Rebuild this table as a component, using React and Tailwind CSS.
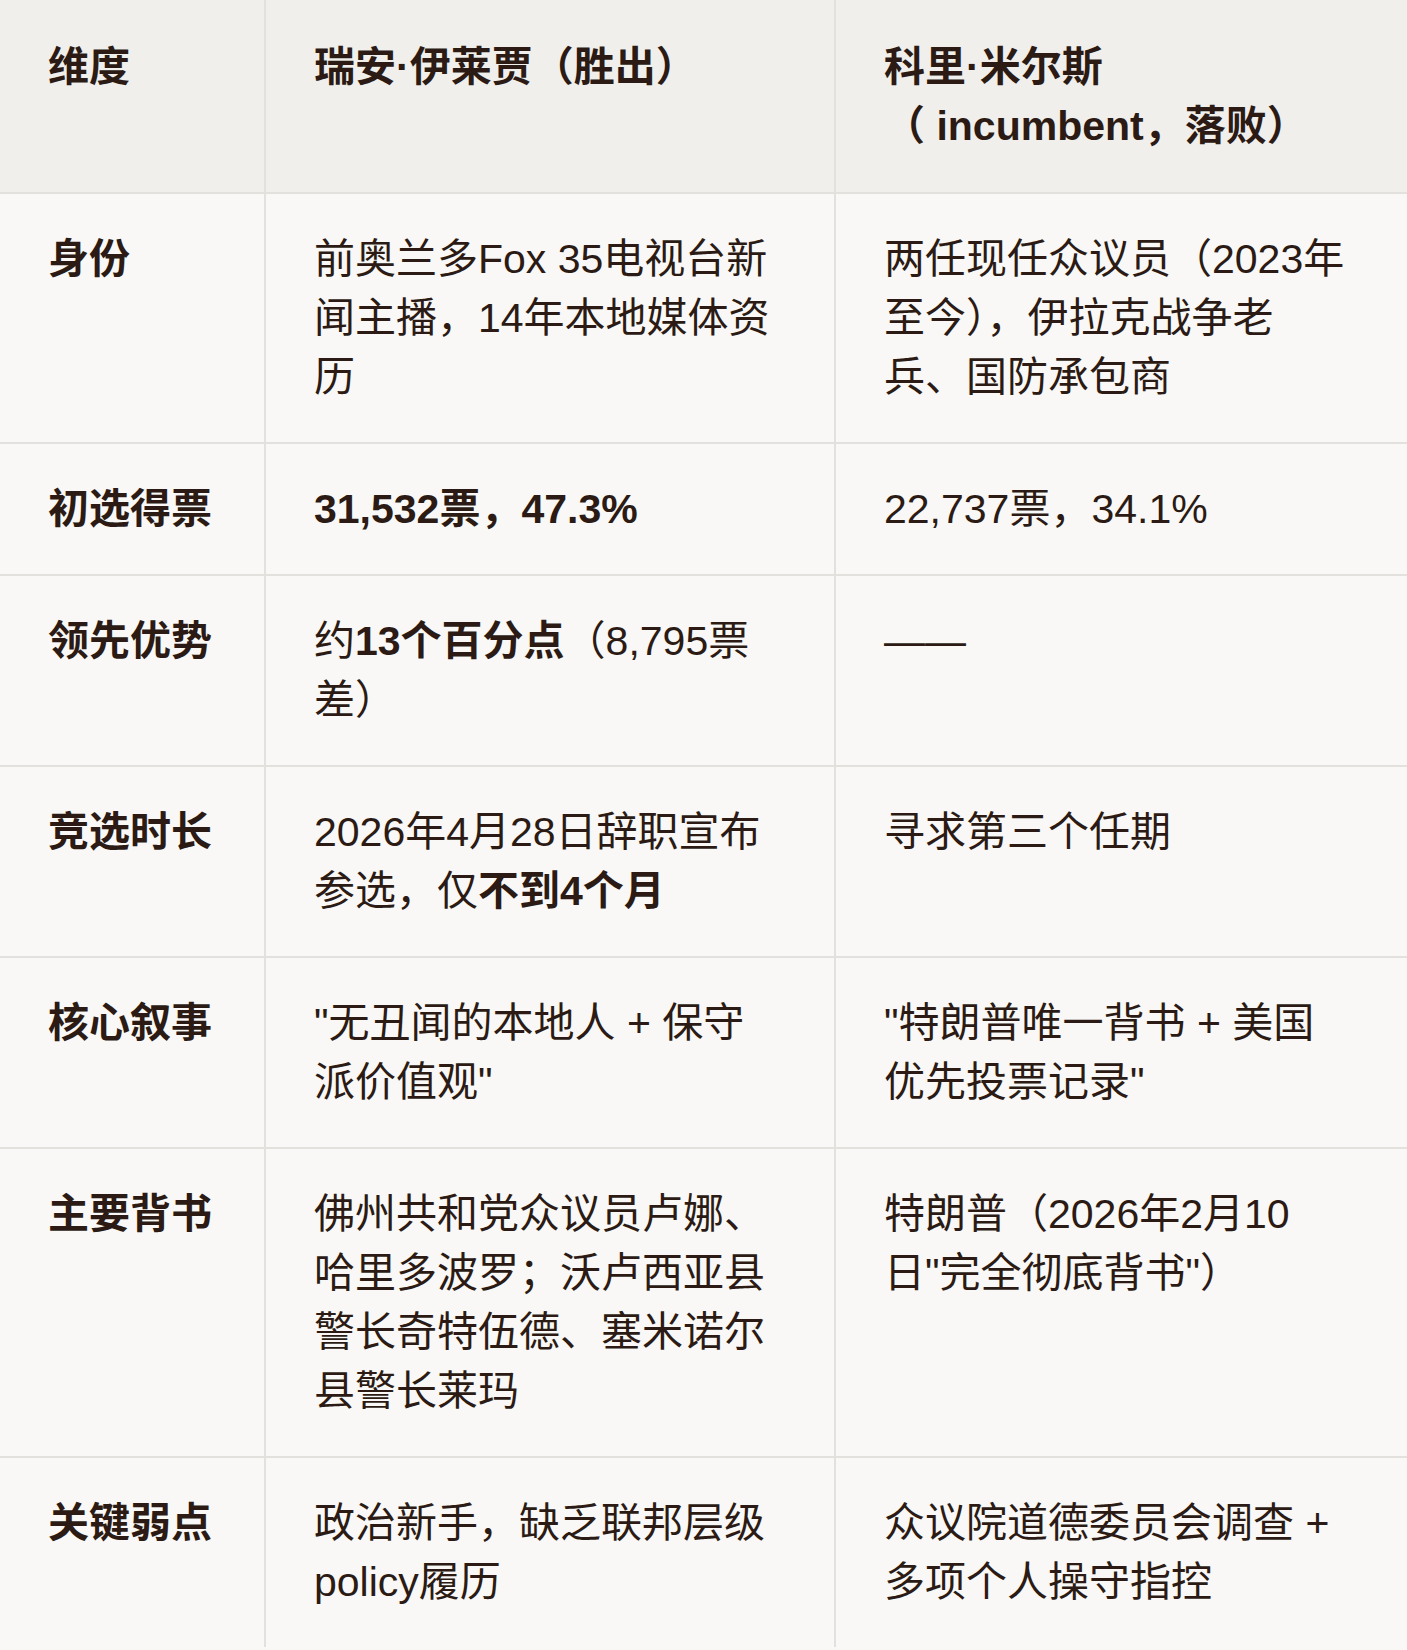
import React from 'react'

const rows = [
  {
    key: '身份',
    a: <>前奥兰多Fox 35电视台新<br />闻主播，14年本地媒体资<br />历</>,
    b: <>两任现任众议员（2023年<br />至今），伊拉克战争老<br />兵、国防承包商</>,
  },
  {
    key: '初选得票',
    a: <strong className="font-bold">31,532票，47.3%</strong>,
    b: <>22,737票，34.1%</>,
  },
  {
    key: '领先优势',
    a: <>约<strong className="font-bold">13个百分点</strong>（8,795票<br />差）</>,
    b: <>——</>,
  },
  {
    key: '竞选时长',
    a: <>2026年4月28日辞职宣布<br />参选，仅<strong className="font-bold">不到4个月</strong></>,
    b: <>寻求第三个任期</>,
  },
  {
    key: '核心叙事',
    a: <>"无丑闻的本地人 + 保守<br />派价值观"</>,
    b: <>"特朗普唯一背书 + 美国<br />优先投票记录"</>,
  },
  {
    key: '主要背书',
    a: <>佛州共和党众议员卢娜、<br />哈里多波罗；沃卢西亚县<br />警长奇特伍德、塞米诺尔<br />县警长莱玛</>,
    b: <>特朗普（2026年2月10<br />日"完全彻底背书"）</>,
  },
  {
    key: '关键弱点',
    a: <>政治新手，缺乏联邦层级<br />policy履历</>,
    b: <>众议院道德委员会调查 +<br />多项个人操守指控</>,
  },
]

const cell = 'align-top pl-[48px] pr-[36px] border-2 border-[#e3e1de]'

const App = () => {
  return (
    <div className="w-[1407px] min-h-[1650px] bg-[#f9f8f6] text-[#2b1b14] font-['Liberation_Sans','Noto_Sans_CJK_SC',sans-serif] text-[41px] leading-[59px]">
      <table className="w-full table-fixed border-collapse border-hidden">
        <colgroup>
          <col className="w-[265px]" />
          <col className="w-[570px]" />
          <col />
        </colgroup>
        <thead>
          <tr className="bg-[#f0efec] text-left">
            <th className={cell + ' font-bold pt-[38px] pb-[36px]'}>维度</th>
            <th className={cell + ' font-bold pt-[38px] pb-[36px]'}>瑞安·伊莱贾（胜出）</th>
            <th className={cell + ' font-bold pt-[38px] pb-[36px]'}>
              科里·米尔斯<br />（ incumbent，落败）
            </th>
          </tr>
        </thead>
        <tbody>
          {rows.map((r) => (
            <tr key={r.key} className="bg-[#f9f8f6]">
              <td className={cell + ' pt-[36px] pb-[35px] font-bold'}>{r.key}</td>
              <td className={cell + ' pt-[36px] pb-[35px] whitespace-nowrap'}>{r.a}</td>
              <td className={cell + ' pt-[36px] pb-[35px] whitespace-nowrap'}>{r.b}</td>
            </tr>
          ))}
        </tbody>
      </table>
    </div>
  )
}

export default App
